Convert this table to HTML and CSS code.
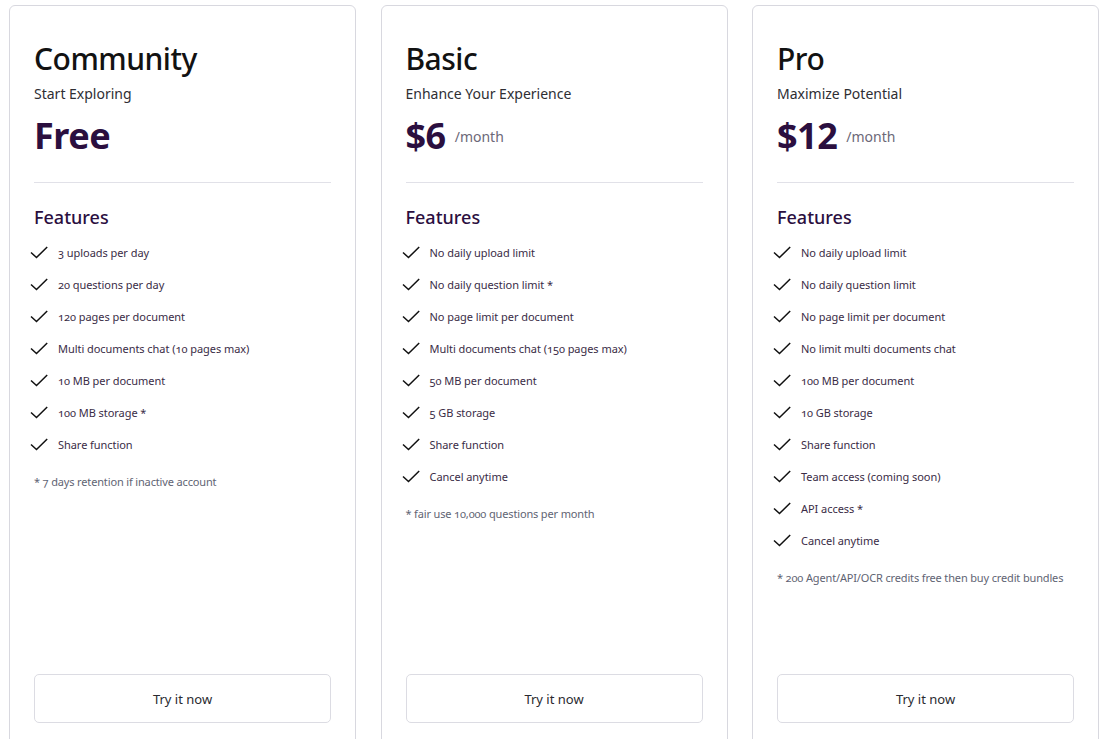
FILE: index.html
```html
<!DOCTYPE html>
<html lang="en">
<head>
<meta charset="utf-8">
<title>Pricing</title>
<link rel="stylesheet" href="styles.css">
</head>
<body>
<main class="plans">
  <section class="card">
    <h2 class="plan-name">Community</h2>
    <p class="plan-sub">Start Exploring</p>
    <div class="price"><span class="amount">Free</span></div>
    <hr class="divider">
    <h3 class="features-title">Features</h3>
    <ul class="features">
      <li><svg class="check" viewBox="0 0 18 13"><path d="M1 6.5 L6.5 11.5 L17.2 1"/></svg><span>3 uploads per day</span></li>
      <li><svg class="check" viewBox="0 0 18 13"><path d="M1 6.5 L6.5 11.5 L17.2 1"/></svg><span>20 questions per day</span></li>
      <li><svg class="check" viewBox="0 0 18 13"><path d="M1 6.5 L6.5 11.5 L17.2 1"/></svg><span>120 pages per document</span></li>
      <li><svg class="check" viewBox="0 0 18 13"><path d="M1 6.5 L6.5 11.5 L17.2 1"/></svg><span>Multi documents chat (10 pages max)</span></li>
      <li><svg class="check" viewBox="0 0 18 13"><path d="M1 6.5 L6.5 11.5 L17.2 1"/></svg><span>10 MB per document</span></li>
      <li><svg class="check" viewBox="0 0 18 13"><path d="M1 6.5 L6.5 11.5 L17.2 1"/></svg><span>100 MB storage *</span></li>
      <li><svg class="check" viewBox="0 0 18 13"><path d="M1 6.5 L6.5 11.5 L17.2 1"/></svg><span>Share function</span></li>
    </ul>
    <p class="note">* 7 days retention if inactive account</p>
    <button class="cta">Try it now</button>
  </section>

  <section class="card">
    <h2 class="plan-name">Basic</h2>
    <p class="plan-sub">Enhance Your Experience</p>
    <div class="price"><span class="amount">$6</span><span class="per">/month</span></div>
    <hr class="divider">
    <h3 class="features-title">Features</h3>
    <ul class="features">
      <li><svg class="check" viewBox="0 0 18 13"><path d="M1 6.5 L6.5 11.5 L17.2 1"/></svg><span>No daily upload limit</span></li>
      <li><svg class="check" viewBox="0 0 18 13"><path d="M1 6.5 L6.5 11.5 L17.2 1"/></svg><span>No daily question limit *</span></li>
      <li><svg class="check" viewBox="0 0 18 13"><path d="M1 6.5 L6.5 11.5 L17.2 1"/></svg><span>No page limit per document</span></li>
      <li><svg class="check" viewBox="0 0 18 13"><path d="M1 6.5 L6.5 11.5 L17.2 1"/></svg><span>Multi documents chat (150 pages max)</span></li>
      <li><svg class="check" viewBox="0 0 18 13"><path d="M1 6.5 L6.5 11.5 L17.2 1"/></svg><span>50 MB per document</span></li>
      <li><svg class="check" viewBox="0 0 18 13"><path d="M1 6.5 L6.5 11.5 L17.2 1"/></svg><span>5 GB storage</span></li>
      <li><svg class="check" viewBox="0 0 18 13"><path d="M1 6.5 L6.5 11.5 L17.2 1"/></svg><span>Share function</span></li>
      <li><svg class="check" viewBox="0 0 18 13"><path d="M1 6.5 L6.5 11.5 L17.2 1"/></svg><span>Cancel anytime</span></li>
    </ul>
    <p class="note">* fair use 10,000 questions per month</p>
    <button class="cta">Try it now</button>
  </section>

  <section class="card">
    <h2 class="plan-name">Pro</h2>
    <p class="plan-sub">Maximize Potential</p>
    <div class="price"><span class="amount">$12</span><span class="per">/month</span></div>
    <hr class="divider">
    <h3 class="features-title">Features</h3>
    <ul class="features">
      <li><svg class="check" viewBox="0 0 18 13"><path d="M1 6.5 L6.5 11.5 L17.2 1"/></svg><span>No daily upload limit</span></li>
      <li><svg class="check" viewBox="0 0 18 13"><path d="M1 6.5 L6.5 11.5 L17.2 1"/></svg><span>No daily question limit</span></li>
      <li><svg class="check" viewBox="0 0 18 13"><path d="M1 6.5 L6.5 11.5 L17.2 1"/></svg><span>No page limit per document</span></li>
      <li><svg class="check" viewBox="0 0 18 13"><path d="M1 6.5 L6.5 11.5 L17.2 1"/></svg><span>No limit multi documents chat</span></li>
      <li><svg class="check" viewBox="0 0 18 13"><path d="M1 6.5 L6.5 11.5 L17.2 1"/></svg><span>100 MB per document</span></li>
      <li><svg class="check" viewBox="0 0 18 13"><path d="M1 6.5 L6.5 11.5 L17.2 1"/></svg><span>10 GB storage</span></li>
      <li><svg class="check" viewBox="0 0 18 13"><path d="M1 6.5 L6.5 11.5 L17.2 1"/></svg><span>Share function</span></li>
      <li><svg class="check" viewBox="0 0 18 13"><path d="M1 6.5 L6.5 11.5 L17.2 1"/></svg><span>Team access (coming soon)</span></li>
      <li><svg class="check" viewBox="0 0 18 13"><path d="M1 6.5 L6.5 11.5 L17.2 1"/></svg><span>API access *</span></li>
      <li><svg class="check" viewBox="0 0 18 13"><path d="M1 6.5 L6.5 11.5 L17.2 1"/></svg><span>Cancel anytime</span></li>
    </ul>
    <p class="note">* 200 Agent/API/OCR credits free then buy credit bundles</p>
    <button class="cta">Try it now</button>
  </section>
</main>
</body>
</html>
```

FILE: styles.css
```css
* { box-sizing: border-box; }

html, body {
  margin: 0;
  height: 100%;
  overflow: hidden;
  background: #ffffff;
}

body {
  font-family: "Noto Sans", "Open Sans", sans-serif;
  font-variant-numeric: oldstyle-nums;
  color: #111;
}

.plans {
  display: grid;
  grid-template-columns: repeat(3, 347px);
  column-gap: 24.5px;
  padding: 5px 0 0 9px;
}

.card {
  display: flex;
  flex-direction: column;
  height: 743px;
  border: 1px solid #d8d8df;
  border-radius: 6px;
  padding: 35px 24px 24px;
}

.plan-name {
  margin: 0;
  font-size: 30px;
  line-height: 36px;
  font-weight: 500;
  color: #121212;
  letter-spacing: -0.5px;
}

.plan-sub {
  margin: 7px 0 0;
  font-size: 14px;
  line-height: 20px;
  color: #2e2e33;
}

.price {
  margin-top: 8px;
  display: flex;
  align-items: flex-start;
  gap: 9px;
  height: 48px;
}

.amount {
  font-size: 36px;
  line-height: 48px;
  font-weight: 700;
  letter-spacing: -0.5px;
  color: #2b0f3f;
  font-variant-numeric: lining-nums;
}

.per {
  margin-top: 15px;
  font-size: 14px;
  line-height: 20px;
  color: #6c6878;
}

.divider {
  margin: 22px 0 0;
  border: 0;
  border-top: 1px solid #e1e1e8;
  height: 0;
}

.features-title {
  margin: 22px 0 0;
  font-size: 18px;
  line-height: 24px;
  font-weight: 500;
  color: #2b0f3f;
}

.features {
  list-style: none;
  margin: 7px 0 0;
  padding: 0;
}

.features li {
  display: flex;
  align-items: center;
  height: 32px;
  font-size: 11px;
  letter-spacing: -0.05px;
  color: #3a2c46;
}

.check {
  width: 18px;
  height: 13px;
  margin-left: -4px;
  margin-right: 10px;
  fill: none;
  stroke: #111;
  stroke-width: 1.5;
  flex: none;
}

.note {
  margin: 14px 0 0;
  font-size: 11px;
  line-height: 16px;
  letter-spacing: -0.15px;
  color: #5f6473;
}

.cta {
  margin-top: auto;
  height: 49px;
  width: 100%;
  background: #fff;
  border: 1px solid #dcdce3;
  border-radius: 5px;
  font-family: "Noto Sans", "Open Sans", sans-serif;
  font-size: 13px;
  color: #2a2a30;
  cursor: pointer;
}
```
